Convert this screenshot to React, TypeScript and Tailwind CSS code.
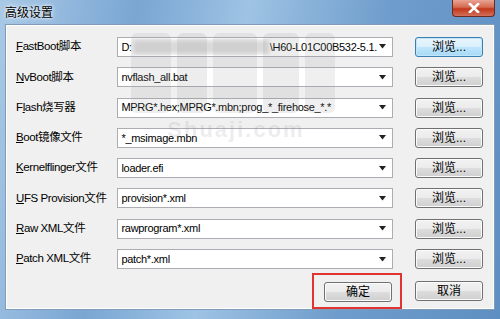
import { ReactNode } from 'react'

const rows: { label: ReactNode; value: ReactNode }[] = [
  { label: <><u>F</u>astBoot脚本</>, value: <>D:<span className="inline-block w-[136px] h-[14px] align-middle bg-[#dadada] blur-[2px] mx-[1px]" />\H60-L01C00B532-5.1.</> },
  { label: <><u>N</u>vBoot脚本</>, value: 'nvflash_all.bat' },
  { label: <>F<u>l</u>ash烧写器</>, value: 'MPRG*.hex;MPRG*.mbn;prog_*_firehose_*.*' },
  { label: <><u>B</u>oot镜像文件</>, value: '*_msimage.mbn' },
  { label: <><u>K</u>ernelflinger文件</>, value: 'loader.efi' },
  { label: <><u>U</u>FS Provision文件</>, value: 'provision*.xml' },
  { label: <><u>R</u>aw XML文件</>, value: 'rawprogram*.xml' },
  { label: <><u>P</u>atch XML文件</>, value: 'patch*.xml' },
]

function WinButton({ children, focus }: { children: ReactNode; focus?: boolean }) {
  return (
    <div
      className={
        'w-[68px] h-[20px] rounded-[3px] border flex items-center justify-center text-[12px] text-black ' +
        (focus
          ? 'border-[#3c7fb1] bg-[linear-gradient(#eaf6fd_0%,#d9f0fc_50%,#bee6fd_51%,#a7d9f5_100%)] shadow-[inset_0_0_0_1px_#bfe6fa]'
          : 'border-[#707070] bg-[linear-gradient(#f2f2f2_0%,#ebebeb_50%,#dddddd_51%,#cfcfcf_100%)] shadow-[inset_0_0_0_1px_#fbfbfb]')
      }
    >
      {children}
    </div>
  )
}

export default function App() {
  return (
    <div
      className="w-[500px] h-[319px] flex flex-col px-[5px] pb-[9px] bg-[linear-gradient(100deg,#a9c9e6_0%,#7aa6d3_25%,#9ec3e4_45%,#6f9dcc_70%,#5e8fc2_100%)] overflow-hidden relative"
      style={{ fontFamily: '"Liberation Sans", "Noto Sans CJK SC", sans-serif' }}
    >
      <div className="h-[24px] flex items-start justify-between">
        <span className="mt-[4px] text-[12px] text-black [text-shadow:0_0_6px_#ffffff,0_0_3px_#ffffff]">高级设置</span>
        <div className="w-[43px] h-[17px] rounded-b-[4px] border border-t-0 border-[#6b2a22] bg-[linear-gradient(#e8a493_0%,#d46a50_45%,#c2371b_55%,#d2705a_100%)] flex items-center justify-center">
          <svg width="12" height="10" viewBox="0 0 12 10">
            <path d="M2 1 L10 9 M10 1 L2 9" stroke="#ffffff" strokeWidth="2.6" strokeLinecap="square" />
          </svg>
        </div>
      </div>

      <div className="flex-1 border border-[#7f9db9] bg-[#f0f0f0] shadow-[inset_0_0_0_1px_#ffffff] pt-[12px] pl-[10px] pr-[11px] relative">
        <div className="flex flex-col gap-[10.3px]">
          {rows.map((r, i) => (
            <div key={i} className="flex items-center h-[20px]">
              <div className="w-[102px] text-[11.5px] tracking-[-0.4px] text-black whitespace-nowrap">{r.label}</div>
              <div className="w-[277px] h-[20px] border border-[#abadb3] bg-white flex items-center pl-[3px] pr-[5px]">
                <span className="flex-1 text-[11px] tracking-[-0.3px] text-black whitespace-nowrap overflow-hidden flex items-center">{r.value}</span>
                <svg width="8" height="5" viewBox="0 0 8 5" className="ml-[2px]">
                  <path d="M0 0 H7 L3.5 4.5 Z" fill="#222" />
                </svg>
              </div>
              <div className="ml-[22px]">
                <WinButton focus={i === 0}>浏览...</WinButton>
              </div>
            </div>
          ))}
        </div>

        <div className="flex justify-end items-center mt-[4px] gap-[13px]">
          <div className="border-2 border-[#e23333] pl-[10px] pr-[8px] pt-[7px] pb-[5px]">
            <WinButton>确定</WinButton>
          </div>
          <WinButton>取消</WinButton>
        </div>

        <div className="absolute left-[125px] top-[8px] w-[210px] h-[110px] pointer-events-none opacity-15">
          <div className="flex gap-[6px] h-[80px]">
            <div className="w-[40px] rounded-[6px] bg-[#9a9a9a]" />
            <div className="w-[30px] rounded-[6px] bg-[#8a8a8a]" />
            <div className="w-[44px] rounded-[6px] bg-[#9a9a9a]" />
            <div className="w-[36px] rounded-[6px] bg-[#8a8a8a]" />
            <div className="w-[30px] rounded-[6px] bg-[#9a9a9a]" />
          </div>
          <div className="text-[22px] font-bold text-[#8a8a8a] tracking-[2px] text-center">Shuaji.com</div>
        </div>
      </div>
    </div>
  )
}
